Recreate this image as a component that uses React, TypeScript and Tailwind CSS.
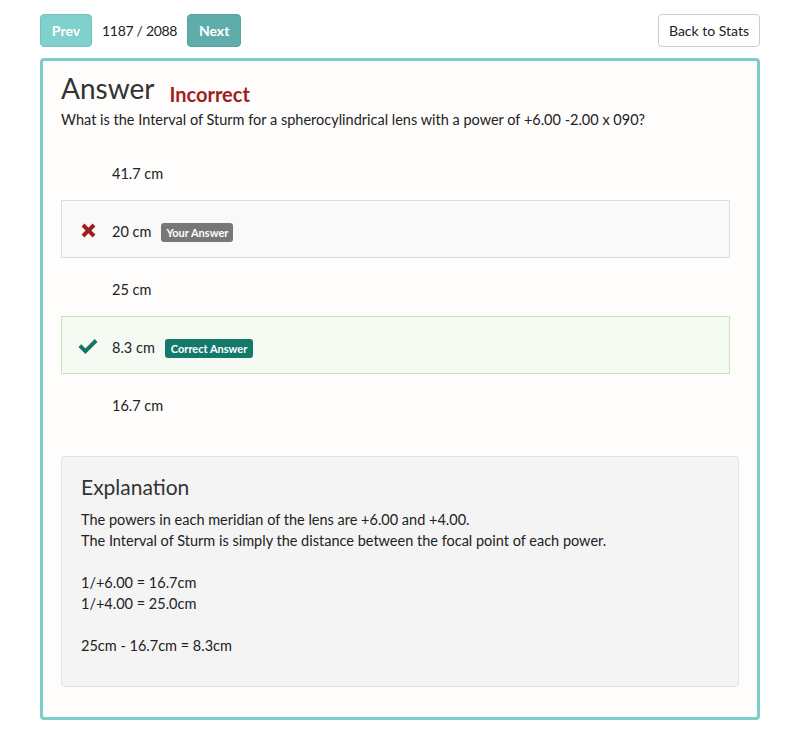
import React from 'react';

interface Option {
  text: string;
  state?: 'wrong' | 'correct';
}

const options: Option[] = [
  { text: '41.7 cm' },
  { text: '20 cm', state: 'wrong' },
  { text: '25 cm' },
  { text: '8.3 cm', state: 'correct' },
  { text: '16.7 cm' },
];

function Cross() {
  return (
    <svg className="w-[17px] h-[17px]" viewBox="0 0 16 16" fill="#a31b1b">
      <path d="M1.5 4.2 4.2 1.5 8 5.3l3.8-3.8 2.7 2.7L10.7 8l3.8 3.8-2.7 2.7L8 10.7l-3.8 3.8-2.7-2.7L5.3 8z" />
    </svg>
  );
}

function Check() {
  return (
    <svg className="w-[20px] h-[17px]" viewBox="0 0 20 16" fill="#137566">
      <path d="M0.5 8.6 3.3 5.8 7.4 9.9 16.7 0.6 19.5 3.4 7.4 15.5z" />
    </svg>
  );
}

function OptionRow({ option }: { option: Option }) {
  const base = 'h-[58px] flex items-center pt-[6px]';
  let box = 'border border-transparent';
  if (option.state === 'wrong') box = 'border border-[#dddddd] bg-[#f9f9fa]';
  if (option.state === 'correct') box = 'border border-[#c5e3bd] bg-[#f5faf3]';

  return (
    <div className={`${base} ${box}`}>
      <div className="w-[50px] flex justify-center pl-[2px] -translate-y-[2px]">
        {option.state === 'wrong' && <Cross />}
        {option.state === 'correct' && <Check />}
      </div>
      <span className="text-[14.5px] text-[#222]">{option.text}</span>
      {option.state === 'wrong' && (
        <span className="ml-[10px] bg-[#777777] text-white text-[11px] font-bold leading-[19px] px-[5px] rounded-[3px]">
          Your Answer
        </span>
      )}
      {option.state === 'correct' && (
        <span className="ml-[10px] bg-[#137a6a] text-white text-[11px] font-bold leading-[19px] px-[6px] rounded-[3px]">
          Correct Answer
        </span>
      )}
    </div>
  );
}

export default function App() {
  return (
    <div
      className="w-[800px] h-[744px] bg-white px-[40px] pt-[14px] text-[#222]"
      style={{ fontFamily: 'Lato, "Open Sans", sans-serif' }}
    >
      {/* Top nav */}
      <div className="flex items-center h-[33px]">
        <button className="h-[33px] w-[52px] rounded-[4px] bg-[#80d0cd] border border-[#74c4c1] text-white text-[14px] font-bold">
          Prev
        </button>
        <span className="ml-[10px] text-[14px] tracking-[-0.3px] text-[#222]">1187 / 2088</span>
        <button className="ml-[10px] h-[33px] w-[54px] rounded-[4px] bg-[#5fadaa] border border-[#57a3a0] text-white text-[14px] font-bold">
          Next
        </button>
        <button className="ml-auto h-[33px] px-[10px] rounded-[4px] bg-white border border-[#cccccc] text-[14px] text-[#222]">
          Back to Stats
        </button>
      </div>

      {/* Card */}
      <div className="mt-[11px] border-[3px] border-[#7ccdc9] rounded-[4px] bg-[#fefdfc] px-[18px] pt-[10px] pb-[30px]">
        <div className="flex items-end">
          <h1 className="text-[28px] leading-[34px] text-[#333]">Answer</h1>
          <span className="ml-[15px] text-[20px] font-bold text-[#a11d1d] leading-[26px] translate-y-[2px]">
            Incorrect
          </span>
        </div>
        <p className="text-[14.5px] leading-[20px] mt-[5px]">
          What is the Interval of Sturm for a spherocylindrical lens with a power of +6.00 -2.00 x 090?
        </p>

        <div className="mt-[12px] mr-[9px]">
          {options.map((o, i) => (
            <OptionRow key={i} option={o} />
          ))}
        </div>

        {/* Explanation */}
        <div className="mt-[24px] bg-[#f4f4f4] border border-[#e3e3e3] rounded-[4px] px-[19px] pt-[16px] pb-[30px]">
          <h2 className="text-[21px] leading-[28px] text-[#333]">Explanation</h2>
          <div className="mt-[8px] text-[14.5px] leading-[21px] text-[#222]">
            <p>The powers in each meridian of the lens are +6.00 and +4.00.</p>
            <p>The Interval of Sturm is simply the distance between the focal point of each power.</p>
            <p className="h-[21px]" />
            <p>1/+6.00 = 16.7cm</p>
            <p>1/+4.00 = 25.0cm</p>
            <p className="h-[21px]" />
            <p>25cm - 16.7cm = 8.3cm</p>
          </div>
        </div>
      </div>
    </div>
  );
}
